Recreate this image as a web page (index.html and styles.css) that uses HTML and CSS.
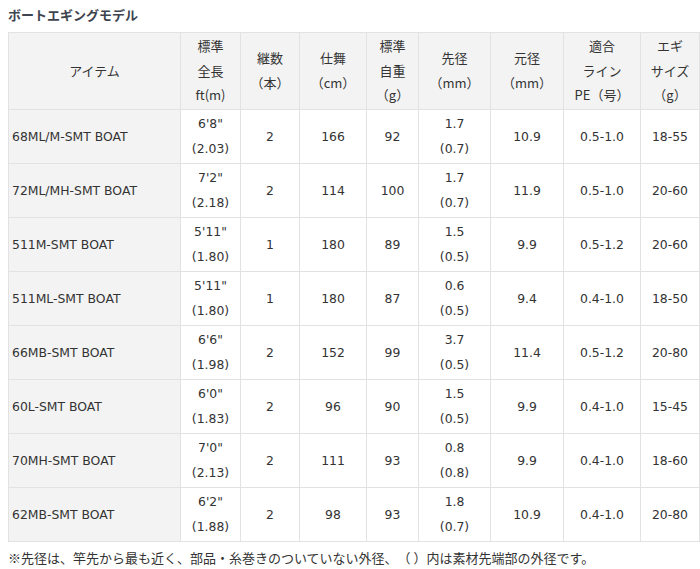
FILE: index.html
```html
<!DOCTYPE html>
<html lang="ja">
<head>
<meta charset="utf-8">
<title>ボートエギングモデル</title>
<link rel="stylesheet" href="styles.css">
</head>
<body>
<h3 class="title">ボートエギングモデル</h3>
<table class="spec">
  <colgroup>
    <col class="c1"><col class="c2"><col class="c3"><col class="c4"><col class="c5"><col class="c6"><col class="c7"><col class="c8"><col class="c9">
  </colgroup>
  <thead>
    <tr>
      <th>アイテム</th>
      <th>標準<br>全長<br>ft(m)</th>
      <th>継数<br>（本）</th>
      <th>仕舞<br>（cm）</th>
      <th>標準<br>自重<br>（g）</th>
      <th>先径<br>（mm）</th>
      <th>元径<br>（mm）</th>
      <th>適合<br>ライン<br>PE（号）</th>
      <th>エギ<br>サイズ<br>（g）</th>
    </tr>
  </thead>
  <tbody>
    <tr><th>68ML/M-SMT BOAT</th><td>6'8"<br>(2.03)</td><td>2</td><td>166</td><td>92</td><td>1.7<br>(0.7)</td><td>10.9</td><td>0.5-1.0</td><td>18-55</td></tr>
    <tr><th>72ML/MH-SMT BOAT</th><td>7'2"<br>(2.18)</td><td>2</td><td>114</td><td>100</td><td>1.7<br>(0.7)</td><td>11.9</td><td>0.5-1.0</td><td>20-60</td></tr>
    <tr><th>511M-SMT BOAT</th><td>5'11"<br>(1.80)</td><td>1</td><td>180</td><td>89</td><td>1.5<br>(0.5)</td><td>9.9</td><td>0.5-1.2</td><td>20-60</td></tr>
    <tr><th>511ML-SMT BOAT</th><td>5'11"<br>(1.80)</td><td>1</td><td>180</td><td>87</td><td>0.6<br>(0.5)</td><td>9.4</td><td>0.4-1.0</td><td>18-50</td></tr>
    <tr><th>66MB-SMT BOAT</th><td>6'6"<br>(1.98)</td><td>2</td><td>152</td><td>99</td><td>3.7<br>(0.5)</td><td>11.4</td><td>0.5-1.2</td><td>20-80</td></tr>
    <tr><th>60L-SMT BOAT</th><td>6'0"<br>(1.83)</td><td>2</td><td>96</td><td>90</td><td>1.5<br>(0.5)</td><td>9.9</td><td>0.4-1.0</td><td>15-45</td></tr>
    <tr><th>70MH-SMT BOAT</th><td>7'0"<br>(2.13)</td><td>2</td><td>111</td><td>93</td><td>0.8<br>(0.8)</td><td>9.9</td><td>0.4-1.0</td><td>18-60</td></tr>
    <tr><th>62MB-SMT BOAT</th><td>6'2"<br>(1.88)</td><td>2</td><td>98</td><td>93</td><td>1.8<br>(0.7)</td><td>10.9</td><td>0.4-1.0</td><td>20-80</td></tr>
  </tbody>
</table>
<p class="note">※先径は、竿先から最も近く、部品・糸巻きのついていない外径、（ ）内は素材先端部の外径です。</p>
</body>
</html>
```
FILE: styles.css
```css
html, body {
  margin: 0;
  padding: 0;
  background: #ffffff;
}
body {
  padding: 0 8px;
  font-family: "DejaVu Sans", "Noto Sans CJK JP", sans-serif;
  font-size: 12.4px;
  color: #333333;
  text-spacing-trim: space-all;
}
.title {
  margin: 0;
  padding-top: 6px;
  height: 26px;
  font-size: 13px;
  font-weight: bold;
  color: #3d4450;
  font-family: "Noto Sans CJK JP", sans-serif;
  line-height: 18px;
}
.spec {
  border-collapse: collapse;
  table-layout: fixed;
  width: 691px;
}
.c1 { width: 172px; }
.c2 { width: 60px; }
.c3 { width: 59px; }
.c4 { width: 67px; }
.c5 { width: 52px; }
.c6 { width: 72px; }
.c7 { width: 73px; }
.c8 { width: 77px; }
.c9 { width: 59px; }
.spec th, .spec td {
  border: 1px solid #e2e2e2;
  line-height: 25px;
  padding: 1px 2px;
  text-align: center;
  vertical-align: middle;
  font-weight: normal;
  white-space: nowrap;
}
.spec thead th {
  background: #f3f3f3;
  padding: 1px 2px 1px;
  line-height: 24.5px;
  font-family: "Noto Sans CJK JP", sans-serif;
  font-size: 13px;
}
.spec tbody th {
  background: #f3f3f3;
  text-align: left;
  padding-left: 3px;
}
.spec tbody tr {
  height: 54px;
}
.note {
  margin: 7px 0 0;
  font-size: 13px;
  line-height: 18px;
  font-family: "Noto Sans CJK JP", sans-serif;
}
```
